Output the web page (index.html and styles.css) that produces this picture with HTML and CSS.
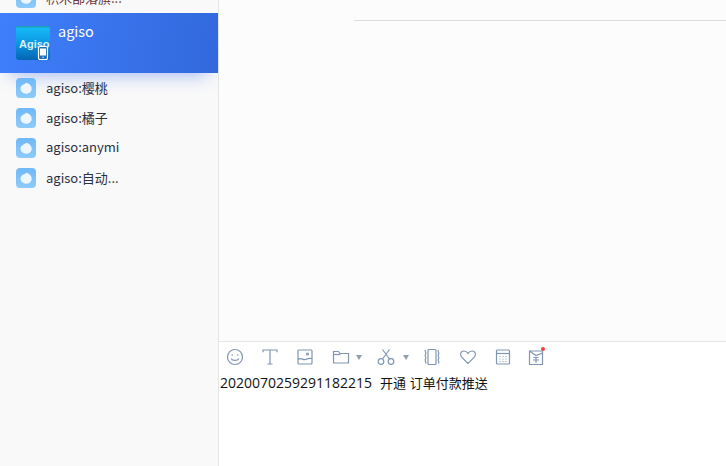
FILE: index.html
```html
<!DOCTYPE html>
<html lang="en">

<head>
    <meta charset="UTF-8">
    <meta name="viewport" content="width=device-width, initial-scale=1.0">
    <title>agiso</title>
    <link rel="stylesheet" href="styles.css">
</head>

<body>
    <div class="app">
        <aside class="sidebar">
            <div class="clipped">
                <div class="item">
                    <svg class="bot" viewBox="0 0 20 20"><use href="#bot"></use></svg>
                    <span>积木部落旗...</span>
                </div>
            </div>
            <div class="selected">
                <svg class="logo" width="34" height="34" viewBox="0 0 34 34">
                    <defs>
                        <linearGradient id="logoBg" x1="0" y1="0" x2="0" y2="1">
                            <stop offset="0" stop-color="#17bdf8"></stop>
                            <stop offset="0.45" stop-color="#0d9be4"></stop>
                            <stop offset="1" stop-color="#0465b4"></stop>
                        </linearGradient>
                    </defs>
                    <rect width="34" height="34" rx="3" fill="url(#logoBg)"></rect>
                    <rect width="34" height="1.500" fill="#1a9fb8"></rect>
                    <text x="3" y="22" class="logo-text">Agiso</text>
                    <rect x="22.500" y="20.500" width="9" height="13" rx="1.500" fill="#1d6fc0" stroke="#fff" stroke-width="1.200"></rect>
                    <rect x="24" y="22.500" width="6" height="7" fill="#fff"></rect>
                    <circle cx="27" cy="31.300" r="0.700" fill="#fff"></circle>
                </svg>
                <span class="selected-name">agiso</span>
            </div>
            <div class="item">
                <svg class="bot" viewBox="0 0 20 20"><use href="#bot"></use></svg>
                <span>agiso:樱桃</span>
            </div>
            <div class="item">
                <svg class="bot" viewBox="0 0 20 20"><use href="#bot"></use></svg>
                <span>agiso:橘子</span>
            </div>
            <div class="item item-anymi">
                <svg class="bot" viewBox="0 0 20 20"><use href="#bot"></use></svg>
                <span>agiso:anymi</span>
            </div>
            <div class="item">
                <svg class="bot" viewBox="0 0 20 20"><use href="#bot"></use></svg>
                <span>agiso:自动...</span>
            </div>
        </aside>

        <main class="chat">
            <div class="messages">
                <div class="divider"></div>
            </div>
            <div class="toolbar">
                <svg class="tool" width="18" height="18" viewBox="0 0 18 18">
                    <circle cx="9" cy="9" r="7.500"></circle>
                    <path d="M5.200 10.500c1 2.600 6.600 2.600 7.600 0"></path>
                    <path d="M6.200 6.200v1.600M11.800 6.200v1.600"></path>
                </svg>
                <svg class="tool tool-t" width="18" height="18" viewBox="0 0 18 18">
                    <path d="M2 4.200V2h14v2.200M9 2v14M6.500 16h5"></path>
                </svg>
                <svg class="tool tool-img" width="18" height="18" viewBox="0 0 18 18">
                    <rect x="2" y="2" width="14" height="14" rx="1"></rect>
                    <path d="M2 11.500c3-2.500 5 1 7.500 0s3-1.500 6.500-1"></path>
                    <circle cx="11.500" cy="6" r="1"></circle>
                </svg>
                <div class="tool-drop tool-folder">
                    <svg class="tool" width="18" height="18" viewBox="0 0 18 18">
                        <path d="M1.500 15V3.500h5l1.500 2h8.500V15z"></path>
                        <path d="M1.500 6.500h7"></path>
                    </svg>
                    <span class="caret"></span>
                </div>
                <div class="tool-drop tool-cut">
                    <svg class="tool" width="18" height="18" viewBox="0 0 18 18">
                        <circle cx="4" cy="13.500" r="2.800"></circle>
                        <circle cx="14" cy="13.500" r="2.800"></circle>
                        <path d="M5.500 11 12.500 1.500M12.500 11 5.500 1.500"></path>
                    </svg>
                    <span class="caret"></span>
                </div>
                <svg class="tool tool-shake" width="18" height="18" viewBox="0 0 18 18">
                    <rect x="5" y="1.500" width="8" height="15" rx="1"></rect>
                    <path d="M2.500 2c-1.500 1.500 1.500 3 0 4.500s1.500 3 0 4.500 1.500 3 0 4.500M15.500 2c-1.500 1.500 1.500 3 0 4.500s1.500 3 0 4.500 1.500 3 0 4.500"></path>
                </svg>
                <svg class="tool tool-heart" width="18" height="18" viewBox="0 0 18 18">
                    <path d="M9 15.500 2.700 9.200C.2 6.500 2 3 5 3c1.800 0 3.100 1 4 2.400C9.900 4 11.200 3 13 3c3 0 4.800 3.500 2.300 6.200z"></path>
                </svg>
                <svg class="tool tool-calc" width="18" height="18" viewBox="0 0 18 18">
                    <rect x="2.500" y="2" width="13" height="14" rx="1"></rect>
                    <path d="M2.500 5.500h13"></path>
                    <path class="dots" d="M5.500 8.500h1M8.500 8.500h1M11.500 8.500h1M5.500 11h1M8.500 11h1M11.500 11h1M5.500 13.500h1M8.500 13.500h1M11.500 13.500h1"></path>
                </svg>
                <div class="tool-order">
                    <svg class="tool" width="18" height="18" viewBox="0 0 18 18">
                        <path d="M2.500 3h13v13.500h-13z"></path>
                        <path d="M2.500 3 9 7.500 15.500 5"></path>
                        <path d="M6.500 9.500h5M6 12h6M9 9.500v5.500"></path>
                    </svg>
                    <span class="red-dot"></span>
                </div>
            </div>
            <div class="input"><span class="order-no">2020070259291182215</span>&nbsp; <span class="open">开通</span> 订单付款推送</div>
        </main>
    </div>

    <svg class="defs" width="0" height="0">
        <defs>
            <linearGradient id="botBg" x1="0" y1="0" x2="0" y2="1">
                <stop offset="0" stop-color="#6fb8f8"></stop>
                <stop offset="1" stop-color="#8ecbfb"></stop>
            </linearGradient>
        </defs>
        <symbol id="bot" viewBox="0 0 20 20">
            <rect width="20" height="20" rx="4" fill="url(#botBg)"></rect>
            <path d="M10.500 4.500c-.6 1-1.800 1.300-3 1.900C5.600 7.200 4.500 8.700 4.500 10.500c0 3 2.400 5.200 5.700 5.200s5.500-2.200 5.500-5c0-3-2.700-5.300-5.700-6.200z" fill="#eef6fe"></path>
        </symbol>
    </svg>
</body>

</html>
```

FILE: styles.css
```css
* {
    box-sizing: border-box;
}

html,
body {
    margin: 0;
    height: 100%;
    overflow: hidden;
    background: #fff;
}

body {
    font-family: "Noto Sans CJK SC", "Open Sans", sans-serif;
}

.app {
    display: flex;
    height: 466px;
}

/* left list */
.sidebar {
    width: 219px;
    flex-shrink: 0;
    background: #f9f9f9;
    border-right: 1px solid #e6e6e6;
}

.clipped {
    height: 13px;
    overflow: hidden;
    display: flex;
    flex-direction: column;
    justify-content: flex-end;
}

.item {
    display: flex;
    align-items: center;
    gap: 10px;
    height: 30px;
    flex-shrink: 0;
    padding-left: 16px;
    font-size: 13px;
    color: #2a3044;
    white-space: nowrap;
}

.item span {
    padding-bottom: 2px;
}

.item-anymi span {
    padding-bottom: 3px;
}

.clipped .item {
    color: #6b3535;
}

.bot {
    width: 20px;
    height: 20px;
    flex-shrink: 0;
}

.selected {
    display: flex;
    align-items: flex-start;
    gap: 8px;
    height: 60px;
    padding: 13px 0 0 16px;
    background: linear-gradient(100deg, #3f7ffc, #3268dc);
    box-shadow: 0 12px 18px -10px rgba(60, 110, 235, 0.45);
    color: #fff;
}

.logo {
    flex-shrink: 0;
}

.logo-text {
    font-family: "Liberation Sans", sans-serif;
    font-size: 11px;
    font-weight: bold;
    fill: #d8f0fb;
}

.selected-name {
    font-size: 14.500px;
    line-height: 18px;
    margin-top: -4px;
}

/* right side */
.chat {
    flex: 1;
    display: flex;
    flex-direction: column;
    min-width: 0;
}

.messages {
    height: 342px;
    flex-shrink: 0;
    padding: 20px 0 0 135px;
    background: #fcfcfc;
    border-bottom: 1px solid #e6e6e6;
}

.divider {
    height: 1px;
    background: #dddddd;
}

.toolbar {
    display: flex;
    align-items: center;
    height: 30px;
    padding-left: 7px;
    background: #fff;
}

.tool {
    flex-shrink: 0;
    fill: none;
    stroke: #7f96b2;
    stroke-width: 1.2;
}

.tool-t {
    margin-left: 17px;
}

.tool-img {
    margin-left: 17px;
}

.tool-drop {
    display: flex;
    align-items: center;
}

.tool-folder {
    margin-left: 18px;
    gap: 6px;
}

.tool-cut {
    margin-left: 15px;
    gap: 8px;
}

.caret {
    width: 0;
    height: 0;
    border-left: 3.500px solid transparent;
    border-right: 3.500px solid transparent;
    border-top: 5px solid #8f9fb3;
}

.tool-shake {
    margin-left: 14px;
}

.tool-heart {
    margin-left: 18px;
}

.tool-calc {
    margin-left: 17px;
}

.dots {
    stroke-width: 1;
}

.tool-order {
    position: relative;
    display: flex;
    margin-left: 15px;
}

.red-dot {
    position: absolute;
    top: -1px;
    right: 0;
    width: 4px;
    height: 4px;
    border-radius: 50%;
    background: #f0413c;
}

.input {
    padding: 1px 0 0 1px;
    font-size: 13px;
    line-height: 20px;
    color: #111;
    white-space: nowrap;
}

.order-no {
    font-family: "Open Sans", sans-serif;
    font-size: 14px;
    margin-right: 2px;
}

.open {
    margin-right: 1px;
}

.defs {
    position: absolute;
}
```
